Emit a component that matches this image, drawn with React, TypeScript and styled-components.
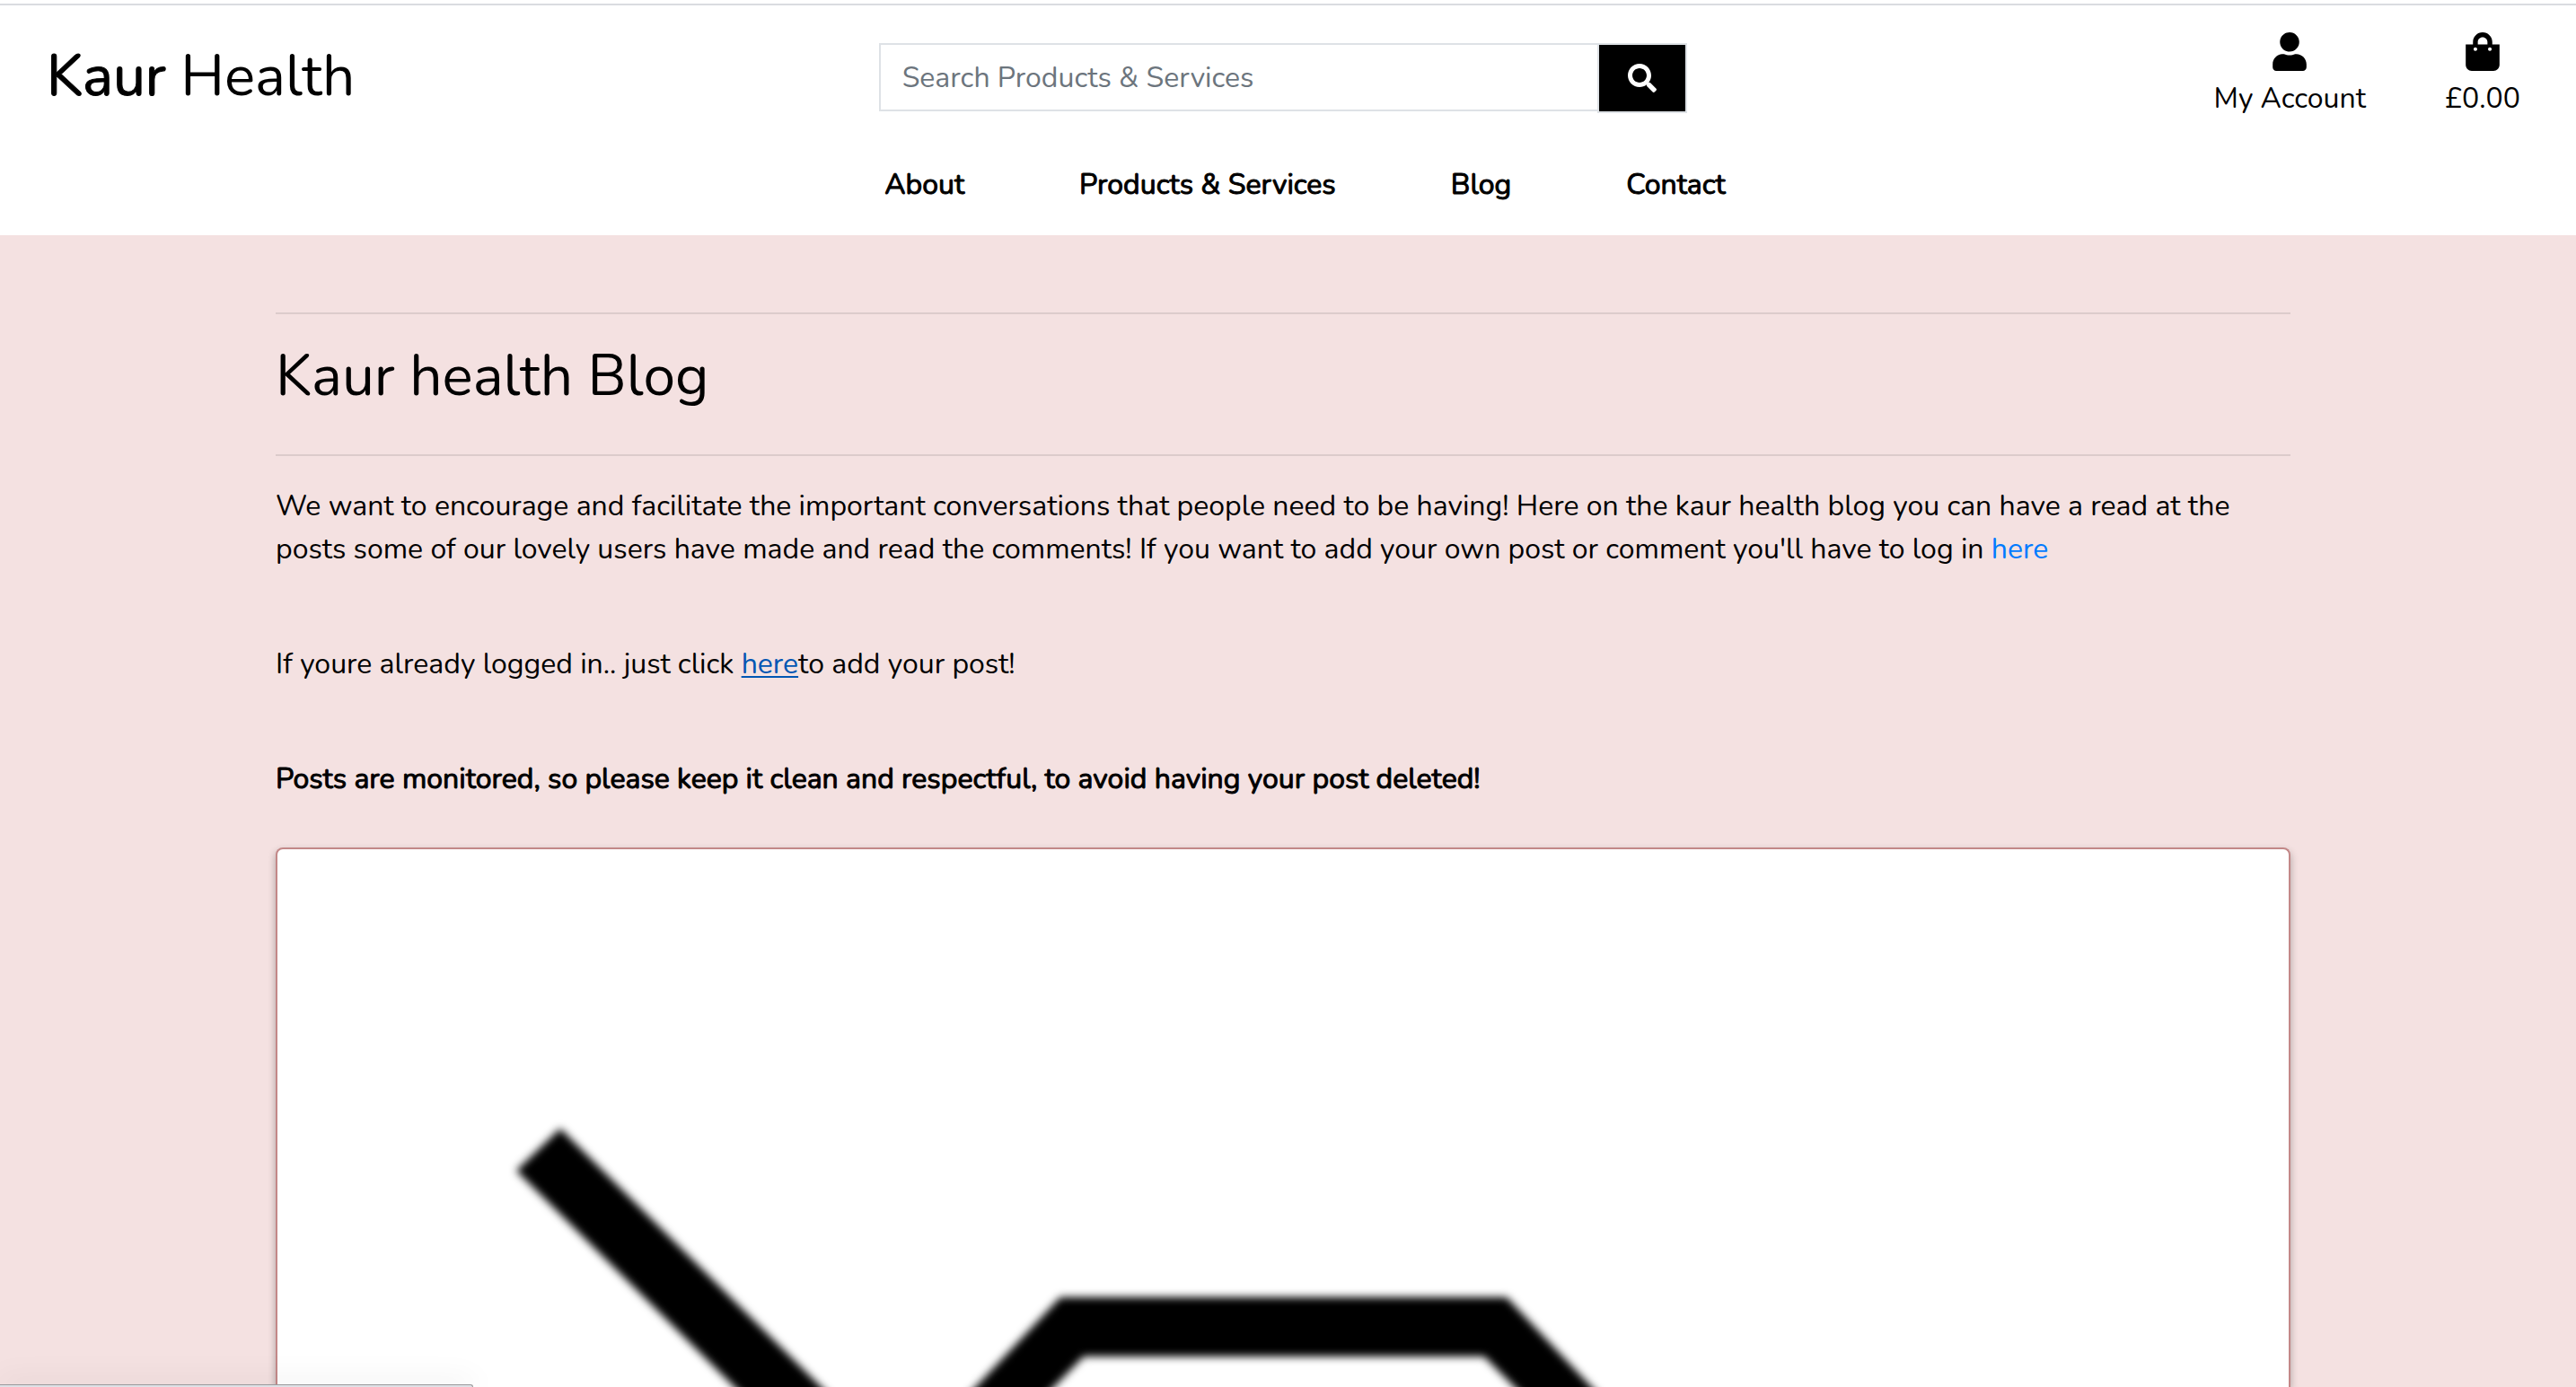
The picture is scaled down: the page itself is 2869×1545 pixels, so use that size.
import React from "react";
import styled, { createGlobalStyle } from "styled-components";
import { FaSearch, FaShoppingBag, FaUser } from "react-icons/fa";

const GlobalStyle = createGlobalStyle`
  *, *::before, *::after {
    box-sizing: border-box;
  }

  body {
    margin: 0;
    background: #f4e1e1;
    color: #000;
    font-family: Nunito, Lato, "Open Sans", sans-serif;
    font-size: 32px;
    line-height: 48px;
  }
`;

const Page = styled.div`
  display: flex;
  flex-direction: column;
  height: 100vh;
  overflow: hidden;
`;

const Header = styled.header`
  flex: none;
  padding: 4px 0 32px;
  background: #fff;
`;

const HeaderRow = styled.div`
  display: grid;
  grid-template-columns: repeat(3, 1fr);
  align-items: start;
  padding: 30px 11px 48px 0;
  border-top: 2px solid #dadce0;
`;

const Logo = styled.a`
  justify-self: start;
  padding: 9px 0 0 52px;
  color: #000;
  font-size: 64px;
  line-height: 80px;
  text-decoration: none;
`;

const LogoStrong = styled.span`
  -webkit-text-stroke: 1px #000;
`;

const SearchForm = styled.form`
  display: flex;
  align-items: flex-start;
  padding: 12px 26px 0;
`;

const SearchInput = styled.input`
  flex: 1;
  min-width: 0;
  height: 76px;
  padding: 0 24px;
  border: 2px solid #dee2e6;
  border-right: 0;
  border-radius: 0;
  outline: 0;
  background: #fff;
  color: #000;
  font: inherit;

  &::placeholder {
    color: #6c757d;
    opacity: 1;
  }
`;

const SearchButton = styled.button`
  display: flex;
  align-items: center;
  justify-content: center;
  width: 100px;
  height: 78px;
  padding: 0;
  border: 2px solid #dee2e6;
  background: #000;
  color: #fff;
  font-size: 32px;
`;

const AccountLinks = styled.nav`
  display: flex;
  justify-content: flex-end;
  gap: 88px;
  padding-right: 51px;
`;

const AccountLink = styled.a`
  display: flex;
  flex-direction: column;
  align-items: center;
  gap: 7px;
  color: #000;
  text-decoration: none;

  svg {
    width: 38px;
    height: 43px;
  }
`;

const MainNav = styled.nav`
  display: flex;
  justify-content: center;
  gap: 128px;
  padding-left: 38px;
`;

const NavLink = styled.a`
  color: #000;
  text-decoration: none;
  -webkit-text-stroke: 1px #000;
`;

const Main = styled.main`
  flex: 1;
  min-height: 0;
  display: flex;
  flex-direction: column;
  padding: 86px 318px 0 307px;
`;

const Divider = styled.hr`
  flex: none;
  width: 100%;
  height: 2px;
  margin: 0;
  border: 0;
  background: #dccbcb;
`;

const Title = styled.h1`
  margin: 31px 0 49px;
  font-size: 64px;
  font-weight: 400;
  line-height: 76px;
`;

const Intro = styled.div`
  display: flex;
  flex-direction: column;
  gap: 80px;
  padding: 32px 0 52px;
`;

const Paragraph = styled.p<{ $strong?: boolean }>`
  margin: 0;
  -webkit-text-stroke: ${(p) => (p.$strong ? "1px #000" : "0")};
`;

const TextLink = styled.a<{ $hovered?: boolean }>`
  color: ${(p) => (p.$hovered ? "#0056b3" : "#007bff")};
  text-decoration: ${(p) => (p.$hovered ? "underline" : "none")};
  text-decoration-thickness: 2px;
  text-underline-offset: 3px;
  text-decoration-skip-ink: none;
`;

const PostCard = styled.article`
  flex: 1;
  min-height: 0;
  overflow: hidden;
  border: 2px solid #c38888;
  border-bottom: 0;
  border-radius: 8px 8px 0 0;
  background: #fff;
  box-shadow: 0 4px 8px rgba(0, 0, 0, 0.3);
`;

const PostImage = styled.svg`
  display: block;
  width: 100%;
  height: auto;
`;

const StatusBubble = styled.div`
  position: fixed;
  bottom: 0;
  left: 0;
  width: 527px;
  height: 3px;
  border-top: 1px solid #9a9a9c;
  border-right: 1px solid #9a9a9c;
  border-radius: 0 6px 0 0;
  background: #dee1e6;
  box-shadow: 0 0 32px rgba(0, 0, 0, 0.3);
`;

const navItems = ["About", "Products & Services", "Blog", "Contact"];

export default function App() {
  return (
    <Page>
      <GlobalStyle />
      <Header>
        <HeaderRow>
          <Logo href="#home">
            <LogoStrong>Kaur</LogoStrong> Health
          </Logo>
          <SearchForm role="search" onSubmit={(e) => e.preventDefault()}>
            <SearchInput
              type="text"
              name="q"
              aria-label="Search Products & Services"
              placeholder="Search Products & Services"
            />
            <SearchButton type="submit" aria-label="Search">
              <FaSearch />
            </SearchButton>
          </SearchForm>
          <AccountLinks aria-label="Account">
            <AccountLink href="#account">
              <FaUser />
              My Account
            </AccountLink>
            <AccountLink href="#bag">
              <FaShoppingBag />
              £0.00
            </AccountLink>
          </AccountLinks>
        </HeaderRow>
        <MainNav aria-label="Main">
          {navItems.map((item) => (
            <NavLink key={item} href="#nav">
              {item}
            </NavLink>
          ))}
        </MainNav>
      </Header>
      <Main>
        <Divider />
        <Title>Kaur health Blog</Title>
        <Divider />
        <Intro>
          <Paragraph>
            We want to encourage and facilitate the important conversations that people need to be having! Here on the
            kaur health blog you can have a read at the posts some of our lovely users have made and read the comments!
            If you want to add your own post or comment you'll have to log in <TextLink href="#login">here</TextLink>
          </Paragraph>
          <Paragraph>
            If youre already logged in.. just click{" "}
            <TextLink href="#add" $hovered>
              here
            </TextLink>
            to add your post!
          </Paragraph>
          <Paragraph $strong>
            Posts are monitored, so please keep it clean and respectful, to avoid having your post deleted!
          </Paragraph>
        </Intro>
        <PostCard>
          <PostImage viewBox="0 0 2240 2240" role="img" aria-label="No image">
            <defs>
              <filter id="soften" x="-5%" y="-5%" width="110%" height="110%">
                <feGaussianBlur stdDeviation="5" />
              </filter>
            </defs>
            <g filter="url(#soften)">
              {/* diagonal strike */}
              <path d="M266 358 L315 311 L1915 1897 L1867 1946 Z" />
              {/* camera outline */}
              <path
                fillRule="evenodd"
                d="M872 499 H1369 L1490 627 H1700 V1700 H540 V835 L772 605 Z M898 565 L620 850 V1620 H1620 V690 H1468 L1344 565 Z"
              />
            </g>
          </PostImage>
        </PostCard>
      </Main>
      <StatusBubble />
    </Page>
  );
}
